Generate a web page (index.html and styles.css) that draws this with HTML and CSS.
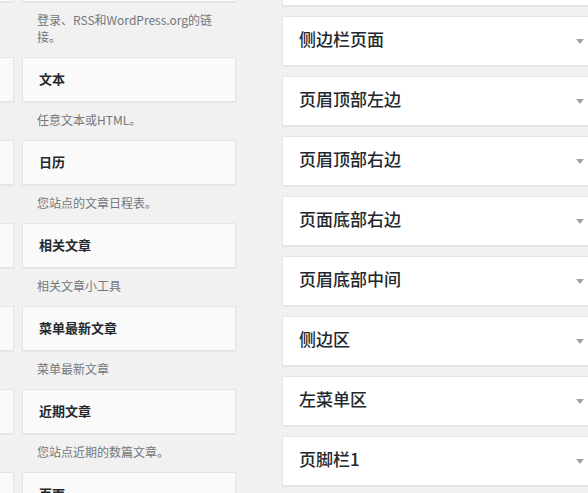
FILE: index.html
```html
<!DOCTYPE html>
<html>
<head>
    <title>小工具</title>
    <link rel="stylesheet" href="styles.css">
</head>
<body>
    <div class="widgets-page">
        <!-- 可用小工具 -->
        <div class="widget-list">
            <div class="widget"><div class="widget-title">自定义菜单</div><div class="widget-desc">添加自定义菜单至您的侧边栏。</div></div>
            <div class="widget"><div class="widget-title">功能</div><div class="widget-desc">登录、RSS和WordPress.org的链接。</div></div>

            <div class="widget"><div class="widget-title">搜索</div><div class="widget-desc">搜索表单</div></div>
            <div class="widget"><div class="widget-title">文本</div><div class="widget-desc">任意文本或HTML。</div></div>

            <div class="widget"><div class="widget-title">文章归档</div><div class="widget-desc">按月份归档</div></div>
            <div class="widget"><div class="widget-title">日历</div><div class="widget-desc">您站点的文章日程表。</div></div>

            <div class="widget"><div class="widget-title">标签云</div><div class="widget-desc">常用标签</div></div>
            <div class="widget"><div class="widget-title">相关文章</div><div class="widget-desc">相关文章小工具</div></div>

            <div class="widget"><div class="widget-title">分类目录</div><div class="widget-desc">分类列表</div></div>
            <div class="widget"><div class="widget-title">菜单最新文章</div><div class="widget-desc">菜单最新文章</div></div>

            <div class="widget"><div class="widget-title">近期评论</div><div class="widget-desc">近期评论</div></div>
            <div class="widget"><div class="widget-title">近期文章</div><div class="widget-desc">您站点近期的数篇文章。</div></div>

            <div class="widget"><div class="widget-title">图像</div><div class="widget-desc">显示图像</div></div>
            <div class="widget"><div class="widget-title">页面</div><div class="widget-desc">您站点的页面列表。</div></div>
        </div>

        <!-- 侧边栏 -->
        <div class="sidebar-list">
            <div class="sidebar"><span class="sidebar-name">主侧边栏</span><span class="arrow"></span></div>
            <div class="sidebar"><span class="sidebar-name">侧边栏页面</span><span class="arrow"></span></div>
            <div class="sidebar"><span class="sidebar-name">页眉顶部左边</span><span class="arrow"></span></div>
            <div class="sidebar"><span class="sidebar-name">页眉顶部右边</span><span class="arrow"></span></div>
            <div class="sidebar"><span class="sidebar-name">页面底部右边</span><span class="arrow"></span></div>
            <div class="sidebar"><span class="sidebar-name">页眉底部中间</span><span class="arrow"></span></div>
            <div class="sidebar"><span class="sidebar-name">侧边区</span><span class="arrow"></span></div>
            <div class="sidebar"><span class="sidebar-name">左菜单区</span><span class="arrow"></span></div>
            <div class="sidebar"><span class="sidebar-name">页脚栏1</span><span class="arrow"></span></div>
            <div class="sidebar"><span class="sidebar-name">页脚栏2</span><span class="arrow"></span></div>
        </div>
    </div>
</body>
</html>
```

FILE: styles.css
```css
html, body { margin: 0; height: 100%; overflow: hidden; }
body { background: #f1f1f1; font-family: "Noto Sans CJK SC", "Liberation Sans", sans-serif; color: #23282d; }

.widgets-page { display: flex; align-items: flex-start; }

.widget-list { display: grid; grid-template-columns: 214px 214px; column-gap: 8px; margin: -43px 0 0 -200px; }
.widget-title { box-sizing: border-box; height: 45px; display: flex; align-items: center; padding: 0 16px 2px; background: #fafafa; border: 1px solid #e5e5e5; box-shadow: 0 1px 1px rgba(0,0,0,.04); font-size: 13px; font-weight: 700; color: #23282d; }
.widget-desc { padding: 9px 15px 12px; font-size: 12px; line-height: 17px; color: #72777c; }

.sidebar-list { display: flex; flex-direction: column; gap: 10px; width: 315px; margin: -44px 0 0 46px; flex-shrink: 0; }
.sidebar { box-sizing: border-box; height: 50px; display: flex; align-items: center; justify-content: space-between; padding: 0 12px 0 16px; background: #fff; border: 1px solid #e5e5e5; box-shadow: 0 1px 1px rgba(0,0,0,.04); }
.sidebar-name { font-size: 17px; font-weight: 500; color: #23282d; margin-bottom: 5px; }
.arrow { width: 0; height: 0; border-top: 5px solid #a0a5aa; border-left: 4px solid transparent; border-right: 4px solid transparent; }
```
